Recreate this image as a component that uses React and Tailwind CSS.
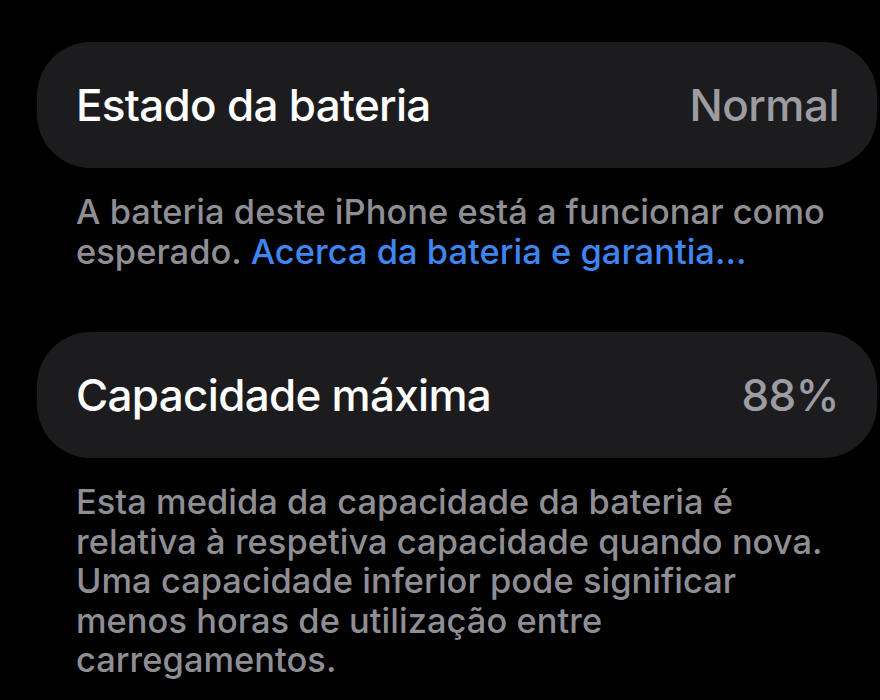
import React from 'react';

const Row = ({ label, value }) => (
  <div className="flex h-[126px] w-[840px] items-center justify-between rounded-[54px] bg-[#1c1c1e] pl-[39px] pr-[38px]">
    <span className="text-[44px] font-medium leading-none tracking-[-0.7px] text-white">{label}</span>
    <span className="text-[44px] font-medium leading-none tracking-[-0.5px] text-[#9c9ca2]">{value}</span>
  </div>
);

const Footer = ({ children }) => (
  <p className="mt-[24px] pl-[39px] text-[34.4px] font-medium leading-[39.5px] tracking-[0.05px] text-[#8e8e94]">
    {children}
  </p>
);

export default function App() {
  return (
    <div
      className="h-[700px] w-[880px] overflow-hidden bg-black pl-[37px] pt-[42px]"
      style={{ fontFamily: "Inter, 'Noto Sans', sans-serif" }}
    >
      <Row label="Estado da bateria" value="Normal" />
      <Footer>
        A bateria deste iPhone está a funcionar como
        <br />
        esperado. <span className="text-[#3e86f2]">Acerca da bateria e garantia...</span>
      </Footer>

      <div className="mt-[61px]">
        <Row label="Capacidade máxima" value="88%" />
      </div>
      <Footer>
        Esta medida da capacidade da bateria é
        <br />
        relativa à respetiva capacidade quando nova.
        <br />
        Uma capacidade inferior pode significar
        <br />
        menos horas de utilização entre
        <br />
        carregamentos.
      </Footer>
    </div>
  );
}
